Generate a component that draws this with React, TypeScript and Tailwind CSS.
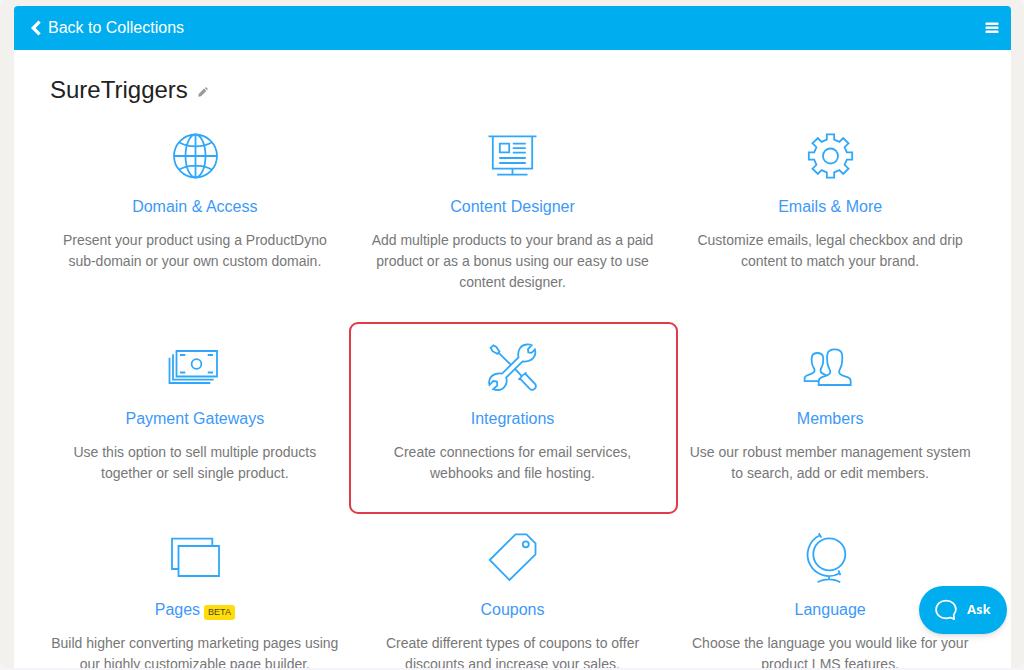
import type { ReactNode } from "react";

interface Feature {
  title: string;
  text: string;
  icon: ReactNode;
  badge?: string;
  highlighted?: boolean;
}

// one cog tooth, repeated every 45 degrees
const cogPoints = Array.from({ length: 8 }, (_, i) => {
  const a = (i * Math.PI) / 4;
  return [[-3.7, -16.3], [-3.7, -21.7], [3.7, -21.7], [3.7, -16.3]]
    .map(([x, y]) => {
      const px = 26.5 + x * Math.cos(a) - y * Math.sin(a);
      const py = 24 + x * Math.sin(a) + y * Math.cos(a);
      return `${px.toFixed(1)},${py.toFixed(1)}`;
    })
    .join(" ");
}).join(" ");

function Icon({ children }: { children: ReactNode }) {
  return (
    <svg
      viewBox="0 0 52 48"
      className="w-[52px] h-12 overflow-visible text-[#2fa8fb]"
      fill="none"
      stroke="currentColor"
      strokeWidth="1.8"
      aria-hidden="true"
    >
      {children}
    </svg>
  );
}

const features: Feature[] = [
  {
    title: "Domain & Access",
    text: "Present your product using a ProductDyno sub-domain or your own custom domain.",
    icon: (
      <Icon>
        <circle cx="26.5" cy="24" r="21.5" />
        <ellipse cx="26.5" cy="24" rx="10" ry="21.5" />
        <path d="M26.5 2.5v43M5 24h43M10 10.2C19 15.7 34 15.7 43 10.2M10 37.8C19 32.3 34 32.3 43 37.8" />
      </Icon>
    ),
  },
  {
    title: "Content Designer",
    text: "Add multiple products to your brand as a paid product or as a bonus using our easy to use content designer.",
    icon: (
      <Icon>
        <path d="M2.5 4.3h48M6.8 4.3v32.4h39.4V4.3M26.5 36.7v6M11.2 42.7h30.3" />
        <path d="M13.8 11.7h9.4v8.7h-9.4zM26.8 11.7h13M26.8 16.2h13M26.8 20.7h13M13.2 26h26.6M13.2 31h26.6" />
      </Icon>
    ),
  },
  {
    title: "Emails & More",
    text: "Customize emails, legal checkbox and drip content to match your brand.",
    icon: (
      <Icon>
        <polygon points={cogPoints} />
        <circle cx="26.5" cy="24" r="7.5" />
      </Icon>
    ),
  },
  {
    title: "Payment Gateways",
    text: "Use this option to sell multiple products together or sell single product.",
    icon: (
      <Icon>
        <path d="M7.5 7h40.5v25.5h-40.5zM4 10.3v25.4h40.7M0.5 13.7v25.3h40.8" />
        <path d="M11 11h5.3M38.7 11h5.3M11 28.5h5.3M38.7 28.5h5.3" />
        <circle cx="27.5" cy="20" r="4.9" />
      </Icon>
    ),
  },
  {
    title: "Integrations",
    text: "Create connections for email services, webhooks and file hosting.",
    highlighted: true,
    icon: (
      <Icon>
        <path d="M4.6 3.8L7.4 1.3L10.3 3L13.5 7.6L11.3 9.9L6.6 7.2ZM12.4 8.7L24.6 20.5M28.8 24.7L35.5 31.8" />
        <path d="M32.3 35.3C34.2 35.3 34.6 33.3 36 31.8C37.3 30.3 39.6 30.4 40 28.2M33.8 34.3L43.6 44.6C46.8 47.8 52 43.6 48.8 39.6L39.5 30" />
        <path d="M32.5 13.5C31 6 35 1 40.5 0.5C42.5 0.2 44.5 0.6 45.7 1.2L42 5L42.3 8.5L45.5 8.8L48.9 5.5C51 12.5 45.5 18.5 36.6 17.4L20.2 33.5C22 39.5 18.5 45.5 12.5 46C10.5 46.2 8.8 45.8 7.2 45.2L11.3 41.5L11 37.6L7.3 37L3.5 41C1.5 34 7 28.4 16.1 29.6Z" />
      </Icon>
    ),
  },
  {
    title: "Members",
    text: "Use our robust member management system to search, add or edit members.",
    icon: (
      <Icon>
        <path d="M14.7 41V37.2C14.7 35 16 34 18 33.2C22 31.5 26.3 31.2 26.3 28C26.3 25 23.8 24 23.3 18C22.8 14 22.9 12 23.5 9.6C24.4 6.5 27.2 5.4 30.7 5.4C34.2 5.4 37 6.5 37.9 9.6C38.5 12 38.6 14 38.1 18C37.6 24 35.1 25 35.1 28C35.1 31.2 39.4 31.5 43.4 33.2C45.4 34 46.7 35 46.7 37.2V41Z" />
        <path d="M14.7 37.2H0.6V34.5C0.6 32.6 1.8 32 3.4 31.3C6.8 29.8 10.6 29.5 10.6 26.5C10.6 23.9 8.2 23 7.8 18.5C7.4 15.5 7.5 14 8 12.2C8.7 9.8 10.8 9 13.4 9C16 9 18.2 9.8 18.9 12.2C19.4 14 19.5 15.5 19.1 18.5C18.7 23 16.5 23.9 16.5 26.5C16.5 29 18.8 29.8 22.5 31.3" />
      </Icon>
    ),
  },
  {
    title: "Pages",
    badge: "BETA",
    text: "Build higher converting marketing pages using our highly customizable page builder.",
    icon: (
      <Icon>
        <path d="M9.5 11h40.5v30h-40.5zM9.5 34h-6.5v-30.3h40.3v7.3" />
      </Icon>
    ),
  },
  {
    title: "Coupons",
    text: "Create different types of coupons to offer discounts and increase your sales.",
    icon: (
      <Icon>
        <path d="M3.7 25L29.5 -0.7H40.5L49.5 8.3V19.3L23.5 45Z" />
        <circle cx="39.8" cy="9.3" r="3" />
      </Icon>
    ),
  },
  {
    title: "Language",
    text: "Choose the language you would like for your product LMS features.",
    icon: (
      <Icon>
        <circle cx="25.3" cy="19.3" r="16" />
        <path d="M16 0.2A21.4 21.4 0 1 0 35.6 38.2M14.8 -1.8L17.3 2.6M34.4 35.4L36.4 40.2M25 40.7V44.4M13.7 47.3C20 43.3 30 43.3 36.2 47.3" />
      </Icon>
    ),
  },
];

function FeatureCard({ feature }: { feature: Feature }) {
  return (
    <article className="relative flex flex-col items-center px-3 text-center">
      {feature.highlighted && (
        <div className="pointer-events-none absolute -top-[22px] -bottom-[30px] -left-[5px] -right-[7px] rounded-[9px] border-2 border-[#e13a4b]" />
      )}
      {feature.icon}
      <h2 className="mt-[15px] flex items-center justify-center gap-1 text-base leading-6">
        <a href="#" className="text-[#3c99f8] hover:underline">{feature.title}</a>
        {feature.badge && (
          <span className="mt-1 rounded-[3px] bg-[#ffdd0c] px-1 text-[9px] leading-[15px] text-[#4d4714]">
            {feature.badge}
          </span>
        )}
      </h2>
      <p className="mt-[11px] text-sm leading-[21px] text-[#777777]">{feature.text}</p>
    </article>
  );
}

export default function App() {
  return (
    <div className="h-screen overflow-hidden bg-[#f5f5f9] pb-0.5 font-['Liberation_Sans',Arial,sans-serif]">
      <div className="h-full overflow-hidden rounded-lg bg-[#f2f1ed] pt-1.5 pl-3.5 pr-[13px]">
        <div className="overflow-hidden rounded-t-[4px] bg-white">
          <header className="flex h-11 items-center justify-between bg-[#00adef] pl-4 pr-3 text-white">
            <a href="#" className="flex items-center gap-1.5 text-base">
              <svg viewBox="0 0 12 16" className="h-4 w-3" fill="none" stroke="currentColor" strokeWidth="3.2" aria-hidden="true">
                <path d="M9.6 1.6L3.2 8L9.6 14.4" />
              </svg>
              Back to Collections
            </a>
            <button type="button" aria-label="Menu" className="flex">
              <svg viewBox="0 0 14 12" className="h-3 w-3.5" fill="currentColor" aria-hidden="true">
                <rect x="0.5" y="0.5" width="13" height="2.4" rx="0.6" />
                <rect x="0.5" y="4.5" width="13" height="2.4" rx="0.6" />
                <rect x="0.5" y="8.5" width="13" height="2.4" rx="0.6" />
              </svg>
            </button>
          </header>

          <main className="px-[22px] pt-[26px] pb-12">
            <div className="flex items-center gap-2.5 pl-3.5">
              <h1 className="text-2xl leading-7 text-[#222222]">SureTriggers</h1>
              <button type="button" aria-label="Edit name" className="mt-1 text-[#999999]">
                <svg viewBox="0 0 10 10" className="size-2.5" fill="currentColor" aria-hidden="true">
                  <path d="M0.2 9.8L0.7 7L6.1 1.6L8.4 3.9L3 9.3ZM6.7 1L7.4 0.4Q7.9 0 8.4 0.4L9.6 1.6Q10 2.1 9.6 2.6L9 3.3Z" />
                </svg>
              </button>
            </div>

            <div className="mt-7 grid grid-cols-3 gap-y-[51px]">
              {features.map((feature) => (
                <FeatureCard key={feature.title} feature={feature} />
              ))}
            </div>
          </main>
        </div>
      </div>

      <button
        type="button"
        className="fixed bottom-9 right-[17px] flex h-12 w-[88px] items-center justify-center gap-2.5 rounded-full bg-[#00adef] font-['Open_Sans',sans-serif] text-[13px] font-bold text-white shadow-md"
      >
        <svg viewBox="0 0 22 22" className="size-[22px]" fill="none" stroke="currentColor" strokeWidth="1.7" strokeLinejoin="round" aria-hidden="true">
          <path d="M19.2 20.2L18.7 15.8C20 14.2 20.9 12.5 20.9 10.6C20.9 5.4 16.6 1.6 11 1.6C5.4 1.6 1.1 5.4 1.1 10.6C1.1 15.8 5.4 19.4 11 19.4C12.8 19.4 14.3 19.1 15.6 18.5Z" />
        </svg>
        Ask
      </button>
    </div>
  );
}
